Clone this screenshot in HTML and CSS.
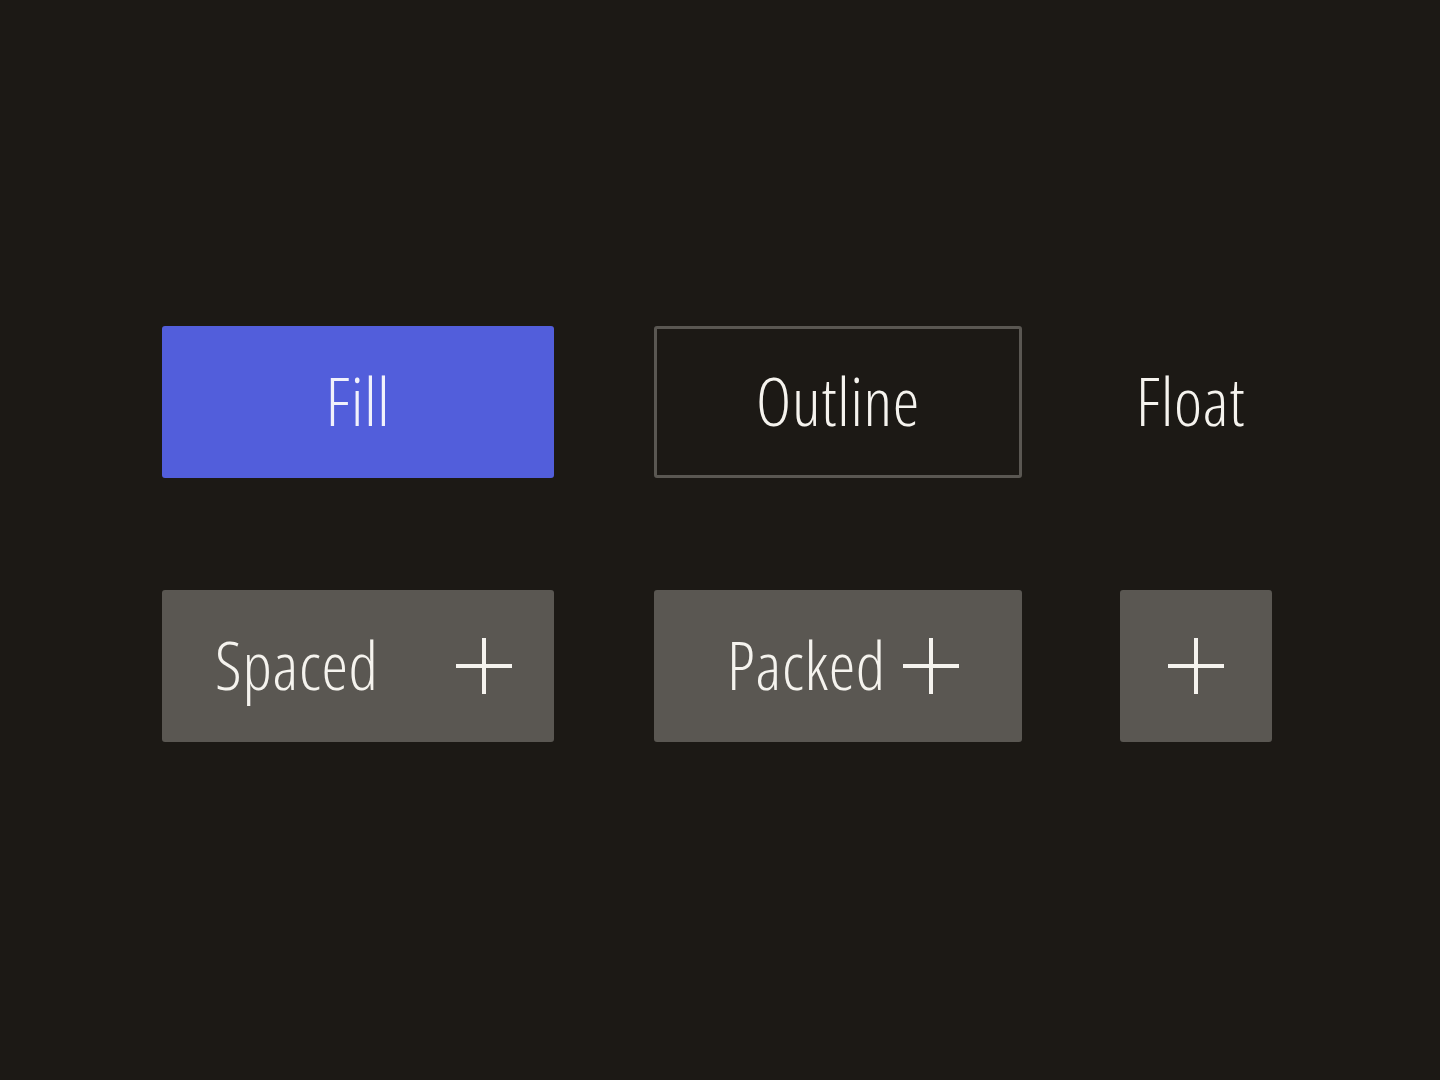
FILE: index.html
```html
<!DOCTYPE html>
<html lang="en">
<head>
<meta charset="utf-8">
<title>Buttons</title>
<link rel="stylesheet" href="styles.css">
</head>
<body>
<main class="board">
  <button class="btn btn-fill"><span class="label">Fill</span></button>
  <button class="btn btn-outline"><span class="label">Outline</span></button>
  <button class="btn btn-float"><span class="label">Float</span></button>

  <button class="btn btn-tone btn-spaced"><span class="label">Spaced</span><svg class="plus" viewBox="0 0 56 56" aria-hidden="true"><rect x="0" y="26" width="56" height="4"/><rect x="26" y="0" width="4" height="56"/></svg></button>
  <button class="btn btn-tone btn-packed"><span class="label">Packed</span><svg class="plus" viewBox="0 0 56 56" aria-hidden="true"><rect x="0" y="26" width="56" height="4"/><rect x="26" y="0" width="4" height="56"/></svg></button>
  <button class="btn btn-tone btn-icon" aria-label="Add"><svg class="plus" viewBox="0 0 56 56" aria-hidden="true"><rect x="0" y="26" width="56" height="4"/><rect x="26" y="0" width="4" height="56"/></svg></button>
</main>
</body>
</html>
```
FILE: styles.css
```css
html, body {
  margin: 0;
  background: #1c1915;
}
body {
  min-height: 1080px;
}
.board {
  display: grid;
  grid-template-columns: 392px 368px 152px;
  grid-template-rows: 152px 152px;
  column-gap: 100px;
  row-gap: 112px;
  padding: 326px 0 0 162px;
  color: #f5f3ee;
}
.btn {
  font: inherit;
  color: inherit;
  border: 0;
  border-radius: 3px;
  background: transparent;
  padding: 0;
  margin: 0;
  display: flex;
  align-items: center;
  justify-content: center;
  box-sizing: border-box;
  height: 152px;
  cursor: pointer;
}
.label {
  display: block;
  font-family: "Open Sans", Roboto, "Liberation Sans", sans-serif;
  font-stretch: 75%;
  font-weight: 320;
  font-size: 67px;
  letter-spacing: 0.7px;
  line-height: 1;
  padding-bottom: 4px;
}
.btn-fill {
  background: #525edb;
  color: #f1f1fb;
}
.btn-outline {
  border: 3px solid #5a5752;
  background: transparent;
}
.btn-float {
  justify-self: start;
  margin-left: -2px;
  padding-left: 16px;
  padding-right: 16px;
}
.btn-tone {
  background: #5a5752;
}
.btn-spaced {
  justify-content: space-between;
  padding: 0 42px 0 53px;
}
.btn-packed {
  gap: 17px;
  padding-left: 10px;
}
.btn-icon {
  width: 152px;
  margin-left: -2px;
}
.plus {
  width: 56px;
  height: 56px;
  fill: #f5f3ee;
  display: block;
  flex: none;
}
```
